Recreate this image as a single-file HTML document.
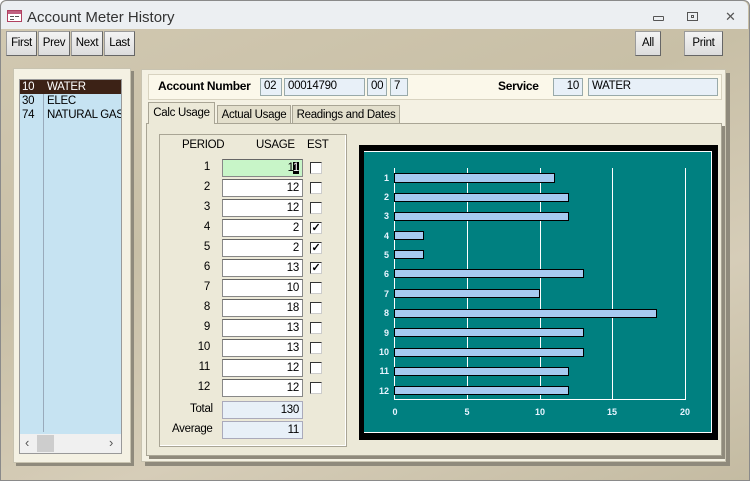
<!DOCTYPE html>
<html><head><meta charset="utf-8"><style>
*{margin:0;padding:0;box-sizing:border-box}
body{width:755px;height:483px;overflow:hidden;background:#fff;font-family:"Liberation Sans",Arial,sans-serif;font-size:11.5px;letter-spacing:-0.3px;position:relative;white-space:nowrap}
.a{position:absolute}
.win{left:0;top:0;width:750px;height:481px;background:linear-gradient(160deg,#d2c9b2,#c8bfa6 40%,#d6cdb8 70%,#c4bba2);border:1px solid #8a8a8a;border-radius:6px 6px 0 0}
.title{left:1px;top:1px;width:747px;height:28px;background:#eceff2;border-radius:6px 6px 0 0}
.btn{background:linear-gradient(#f4f4f4,#dcdcdc);border:1px solid #9a9a9a;border-right-color:#666;border-bottom-color:#666;text-align:center;line-height:22px;height:25px;top:31px}
.fld{background:#e8f0f8;border:1px solid #9aa;line-height:15px;padding:0 3px;height:18px}
.inp{background:#fff;border:1px solid #888;border-top-color:#666;text-align:right;padding-right:3px;line-height:16px;height:18px;left:222px;width:81px}
.lab{text-align:right;width:40px;left:170px}
.cb{left:310px;width:12px;height:12px;background:#fff;border:1px solid #333;border-right-color:#ccc;border-bottom-color:#ccc;font-size:11px;line-height:10px;text-align:center;font-weight:bold}
</style></head><body>
<div class="a win"></div>
<div class="a title"></div>
<div class="a" style="left:7px;top:10px;width:15px;height:12px;border:1px solid #b04060;background:#fff"><div class="a" style="left:0;top:0;width:13px;height:3px;background:#c06080"></div><div class="a" style="left:2px;top:5px;width:4px;height:1px;background:#555"></div><div class="a" style="left:7px;top:5px;width:4px;height:1px;background:#555"></div><div class="a" style="left:2px;top:8px;width:4px;height:1px;background:#555"></div></div>
<div class="a" style="left:27px;top:9px;font-size:15px;color:#333;letter-spacing:0">Account Meter History</div>
<div class="a" style="left:653px;top:16px;width:11px;height:5px;border:1px solid #555;border-radius:1px"></div>
<div class="a" style="left:687px;top:12px;width:11px;height:9px;border:1px solid #555"><div class="a" style="left:3px;top:2px;width:3px;height:3px;border:1px solid #555"></div></div>
<div class="a" style="left:725px;top:9px;font-size:13px;color:#555">✕</div>
<div class="a btn" style="left:6px;width:31px">First</div>
<div class="a btn" style="left:38px;width:32px">Prev</div>
<div class="a btn" style="left:71px;width:32px">Next</div>
<div class="a btn" style="left:104px;width:31px">Last</div>
<div class="a btn" style="left:635px;width:26px">All</div>
<div class="a btn" style="left:684px;width:39px">Print</div>
<!-- left list -->
<div class="a" style="left:13px;top:68px;width:118px;height:395px;background:#f4f1e3;border:1px solid #c8c3b0;box-shadow:3px 3px 0 #8f8a7c"></div>
<div class="a" style="left:19px;top:79px;width:103px;height:375px;background:#c6e3f2;border:1px solid #999"></div>
<div class="a" style="left:43px;top:80px;width:1px;height:352px;background:#9ab"></div>
<div class="a" style="left:20px;top:80px;width:101px;height:14px;background:#3c2216"></div>
<div class="a" style="left:22px;top:80px;color:#fff;line-height:14px">10</div><div class="a" style="left:47px;top:80px;color:#fff;line-height:14px">WATER</div>
<div class="a" style="left:22px;top:94px;line-height:14px">30</div><div class="a" style="left:47px;top:94px;line-height:14px">ELEC</div>
<div class="a" style="left:22px;top:108px;line-height:14px">74</div><div class="a" style="left:47px;top:108px;line-height:14px;width:74px;overflow:hidden">NATURAL GAS</div>
<div class="a" style="left:20px;top:434px;width:101px;height:19px;background:#f0f0f0"></div>
<div class="a" style="left:37px;top:435px;width:17px;height:17px;background:#cdcdcd"></div>
<div class="a" style="left:25px;top:435px;font-size:13px;color:#555">‹</div>
<div class="a" style="left:109px;top:435px;font-size:13px;color:#555">›</div>
<!-- main panel -->
<div class="a" style="left:141px;top:69px;width:585px;height:393px;background:#f4f1e3;border:1px solid #c8c3b0;box-shadow:4px 4px 0 #8f8a7c"></div>
<div class="a" style="left:148px;top:74px;width:574px;height:26px;background:#fbf8ea;border:1px solid #d8d3c0"></div>
<div class="a" style="left:158px;top:79px;font-weight:bold;font-size:12px">Account Number</div>
<div class="a fld" style="left:260px;top:78px;width:22px">02</div>
<div class="a fld" style="left:284px;top:78px;width:81px">00014790</div>
<div class="a fld" style="left:367px;top:78px;width:20px">00</div>
<div class="a fld" style="left:390px;top:78px;width:18px">7</div>
<div class="a" style="left:498px;top:79px;font-weight:bold;font-size:12px">Service</div>
<div class="a fld" style="left:553px;top:78px;width:30px;text-align:right">10</div>
<div class="a fld" style="left:588px;top:78px;width:130px">WATER</div>
<div class="a" style="left:146px;top:123px;width:576px;height:333px;background:#ece9d8;border:1px solid #a9a595;box-shadow:3px 3px 0 #8f8a7c"></div>
<div class="a" style="left:148px;top:102px;width:67px;height:22px;background:#ece9d8;border:1px solid #a9a595;border-bottom:none;line-height:21px;text-align:center">Calc Usage</div>
<div class="a" style="left:217px;top:105px;width:74px;height:19px;background:#e3dfcc;border:1px solid #a9a595;line-height:18px;text-align:center">Actual Usage</div>
<div class="a" style="left:292px;top:105px;width:108px;height:19px;background:#e3dfcc;border:1px solid #a9a595;line-height:18px;text-align:center">Readings and Dates</div>
<div class="a" style="left:159px;top:134px;width:188px;height:313px;border:1px solid #a9a595;box-shadow:inset -1px -1px 0 #fff"></div>
<div class="a" style="left:182px;top:139px">PERIOD</div>
<div class="a" style="left:256px;top:139px">USAGE</div>
<div class="a" style="left:307px;top:139px">EST</div>
<div class="a lab" style="top:161px">1</div><div class="a inp" style="top:159px;background:#c8f5c8">1<span style="background:#000;color:#fff">1</span></div><div class="a cb" style="top:162px"></div>
<div class="a lab" style="top:181px">2</div><div class="a inp" style="top:179px">12</div><div class="a cb" style="top:182px"></div>
<div class="a lab" style="top:201px">3</div><div class="a inp" style="top:199px">12</div><div class="a cb" style="top:202px"></div>
<div class="a lab" style="top:221px">4</div><div class="a inp" style="top:219px">2</div><div class="a cb" style="top:222px">✓</div>
<div class="a lab" style="top:241px">5</div><div class="a inp" style="top:239px">2</div><div class="a cb" style="top:242px">✓</div>
<div class="a lab" style="top:261px">6</div><div class="a inp" style="top:259px">13</div><div class="a cb" style="top:262px">✓</div>
<div class="a lab" style="top:281px">7</div><div class="a inp" style="top:279px">10</div><div class="a cb" style="top:282px"></div>
<div class="a lab" style="top:301px">8</div><div class="a inp" style="top:299px">18</div><div class="a cb" style="top:302px"></div>
<div class="a lab" style="top:321px">9</div><div class="a inp" style="top:319px">13</div><div class="a cb" style="top:322px"></div>
<div class="a lab" style="top:341px">10</div><div class="a inp" style="top:339px">13</div><div class="a cb" style="top:342px"></div>
<div class="a lab" style="top:361px">11</div><div class="a inp" style="top:359px">12</div><div class="a cb" style="top:362px"></div>
<div class="a lab" style="top:381px">12</div><div class="a inp" style="top:379px">12</div><div class="a cb" style="top:382px"></div>
<div class="a" style="left:190px;top:403px">Total</div>
<div class="a inp" style="top:401px;background:#e8f0f8;border-color:#aab">130</div>
<div class="a" style="left:172px;top:423px">Average</div>
<div class="a inp" style="top:421px;background:#e8f0f8;border-color:#aab">11</div>
<!-- chart -->
<svg class="a" style="left:0;top:0;letter-spacing:0" width="755" height="483" font-family="Liberation Sans,Arial,sans-serif" font-weight="bold" font-size="9">
<rect x="359" y="145" width="359" height="295" fill="#000"/>
<rect x="364" y="151" width="348" height="282" fill="#fff"/>
<rect x="364" y="152" width="347" height="280" fill="#008080"/>
<g stroke="#fff" stroke-width="1">
<line x1="467.5" y1="168" x2="467.5" y2="399"/><line x1="540.5" y1="168" x2="540.5" y2="399"/><line x1="612.5" y1="168" x2="612.5" y2="399"/><line x1="685.5" y1="168" x2="685.5" y2="399"/>
<line x1="394.5" y1="168" x2="394.5" y2="400"/><line x1="394" y1="399.5" x2="686" y2="399.5"/>
</g>
<g fill="#a6caf0" stroke="#000" stroke-width="1">
<rect x="394.5" y="173.5" width="160" height="9"/>
<rect x="394.5" y="193.5" width="174" height="8"/>
<rect x="394.5" y="212.5" width="174" height="8"/>
<rect x="394.5" y="231.5" width="29" height="8"/>
<rect x="394.5" y="250.5" width="29" height="8"/>
<rect x="394.5" y="269.5" width="189" height="8"/>
<rect x="394.5" y="289.5" width="145" height="8"/>
<rect x="394.5" y="309.5" width="262" height="8"/>
<rect x="394.5" y="328.5" width="189" height="8"/>
<rect x="394.5" y="348.5" width="189" height="8"/>
<rect x="394.5" y="367.5" width="174" height="8"/>
<rect x="394.5" y="386.5" width="174" height="8"/>
</g>
<g fill="#e8f4ff" text-anchor="end">
<text x="389" y="181">1</text><text x="389" y="200">2</text><text x="389" y="219">3</text><text x="389" y="239">4</text><text x="389" y="258">5</text><text x="389" y="277">6</text><text x="389" y="297">7</text><text x="389" y="316">8</text><text x="389" y="336">9</text><text x="389" y="355">10</text><text x="389" y="374">11</text><text x="389" y="394">12</text>
</g>
<g fill="#e8f4ff" text-anchor="middle">
<text x="395" y="415">0</text><text x="467" y="415">5</text><text x="540" y="415">10</text><text x="612" y="415">15</text><text x="685" y="415">20</text>
</g>
</svg>
</body></html>
